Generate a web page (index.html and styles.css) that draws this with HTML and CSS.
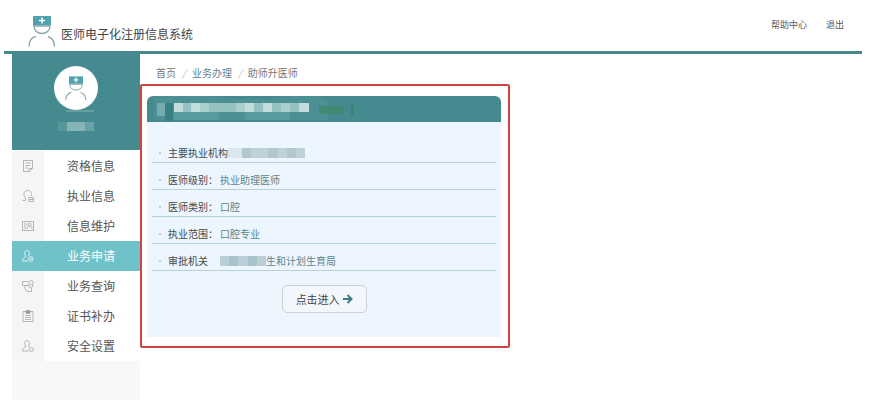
FILE: index.html
```html
<!DOCTYPE html>
<html lang="zh-CN">

<head>
    <meta charset="UTF-8">
    <title>医师电子化注册信息系统</title>
    <link rel="stylesheet" href="styles.css">
</head>

<body>

    <!-- 公用图形 -->
    <svg class="defs" width="0" height="0" aria-hidden="true">
        <symbol id="doctor" viewBox="0 0 28 32">
            <path d="M5 .5h18v9.500H5z" fill="#4fa3ae" />
            <path d="M14 2v6M11 5h6" stroke="#fff" stroke-width="1.500" />
            <path d="M6 10.500c0 10 16 10 16 0zM1 31c0-6 2.500-9 7-10M20 21c4 1.500 6.500 5 6.500 10" fill="none" stroke="#8ba9ad" stroke-width="1.400" />
        </symbol>
    </svg>

    <div class="page">

        <!-- 头部 -->
        <header class="header">
            <svg class="logo"><use href="#doctor" /></svg>
            <h1>医师电子化注册信息系统</h1>
            <nav class="tools">
                <a href="#">帮助中心</a>
                <a href="#">退出</a>
            </nav>
        </header>

        <div class="content">

            <!-- 左侧菜单 -->
            <aside class="side">
                <div class="user">
                    <div class="avatar"><svg><use href="#doctor" /></svg></div>
                    <svg class="user-name" viewBox="0 0 36 21" aria-hidden="true">
                        <path d="M8 1h28" stroke="#86b6b3" />
                        <path d="M0 12h9v9H0z" fill="#57969a" />
                        <path d="M9 12h18v9H9z" fill="#86b5b8" />
                        <path d="M27 12h9v9h-9z" fill="#69a2a6" />
                    </svg>
                </div>
                <ul class="menu">
                    <li><a href="#">
                        <span class="icon"><svg viewBox="0 0 12 12"><path d="M7 11.500H1.500V.5h9V8M3.500 3h5M3.500 5.500h5M3.500 8H6M7 11.500V8.500h3.500z" /></svg></span>
                        <span class="name">资格信息</span></a></li>
                    <li><a href="#">
                        <span class="icon"><svg viewBox="0 0 12 12"><path d="M3.500 8C.5 5 2 .5 5.500.5S10.500 4 9 6M3.500 8v2.500H.5M7 7.500h4.500v4H7zM7 9.500h4.500" /></svg></span>
                        <span class="name">执业信息</span></a></li>
                    <li><a href="#">
                        <span class="icon"><svg viewBox="0 0 12 12"><path d="M.5 1.500h11v9H.5zM2 4h3M2 6h2M2 8h2M5 9c0-2 1-3 2.500-3S10 7 10 9" /><circle cx="7.500" cy="4.500" r="1.500" /></svg></span>
                        <span class="name">信息维护</span></a></li>
                    <li class="current"><a href="#">
                        <span class="icon"><svg viewBox="0 0 12 12"><path d="M4 6.500C2 4 2.500.5 5 .5S8 4 6.500 6M4 6.500C2 7.500.5 8.500.5 11H6" /><circle cx="8.800" cy="9" r="2.300" /><path d="M7.500 9h2.600" /></svg></span>
                        <span class="name">业务申请</span></a></li>
                    <li><a href="#">
                        <span class="icon"><svg viewBox="0 0 12 12"><path d="M6 1.500H.5v4H3v3l2 3h4.500V7.500L6 6.500V4M3 5.500h3" /><circle cx="9" cy="2.800" r="2.200" /><path d="M10.500 4.500V7" /></svg></span>
                        <span class="name">业务查询</span></a></li>
                    <li><a href="#">
                        <span class="icon"><svg viewBox="0 0 12 12"><path d="M1 1.500h10v10H1zM3 5.500h6M3 7.500h6M3 9.500h6" /><path d="M4 .5h4v3H4z" fill="#999" /></svg></span>
                        <span class="name">证书补办</span></a></li>
                    <li><a href="#">
                        <span class="icon"><svg viewBox="0 0 12 12"><path d="M4 6.500C2 4 2.500.5 5 .5S8 4 6.500 6.500M4 6.500C2 7.500.5 8.500.5 11H7M6.500 6.500L8 7.500" /><circle cx="9.500" cy="9.500" r="1.900" /></svg></span>
                        <span class="name">安全设置</span></a></li>
                </ul>
            </aside>

            <main class="main">
                <!-- 面包屑 -->
                <nav class="crumb">
                    <a href="#">首页</a><i>/</i><a href="#" class="link">业务办理</a><i>/</i><span>助师升医师</span>
                </nav>

                <div class="cards">
                    <div class="frame">
                        <section class="card">
                            <div class="card-head">
                                <svg viewBox="0 0 196 26" aria-hidden="true">
                                    <path d="M0 0h64l8 3h48l8-3h36l10 5v19H0z" fill="#4d9094" />
                                    <path d="M3 7h8v13H3z" fill="#75acad" />
                                    <path d="M11 7h8v18h-8z" fill="#398085" />
                                    <path d="M20 7h135v9H20z" fill="#95c1c1" />
                                    <path d="M20 7h9v9h-9zM37 7h9v9h-9zM91 7h9v9h-9zM109 7h9v9h-9zM145 7h10v9h-10z" fill="#c2dedc" />
                                    <path d="M46 7h9v9h-9zM82 7h9v9h-9zM127 7h9v9h-9z" fill="#a9cecd" />
                                    <path d="M20 16h45v8H20zM91 16h45v8H91z" fill="#599b9c" />
                                    <path d="M165 10h25v8h-25z" fill="#418975" />
                                </svg>
                                <b>]</b>
                            </div>
                            <div class="card-body">
                                <dl>
                                    <div class="row">
                                        <dt>主要执业机构</dt>
                                        <dd><svg class="mask" viewBox="0 0 78 10" aria-hidden="true">
                                            <path d="M0 0h14v10H0z" fill="#dbe7ef" />
                                            <path d="M14 0h63v10H14z" fill="#bfd2d8" />
                                            <path d="M14 0h9v10h-9zM40 0h10v10H40zM59 0h9v10h-9z" fill="#b2c8ce" />
                                        </svg></dd>
                                    </div>
                                    <div class="row"><dt>医师级别：</dt><dd>执业助理医师</dd></div>
                                    <div class="row"><dt>医师类别：</dt><dd>口腔</dd></div>
                                    <div class="row"><dt>执业范围：</dt><dd>口腔专业</dd></div>
                                    <div class="row">
                                        <dt>审批机关</dt>
                                        <dd><svg class="mask short" viewBox="0 0 46 10" aria-hidden="true">
                                            <path d="M0 0h46v10H0z" fill="#b9cfd5" />
                                            <path d="M9 0h9v10H9zM28 0h9v10h-9z" fill="#a9c3ca" />
                                        </svg>生和计划生育局</dd>
                                    </div>
                                </dl>
                                <button type="button" class="enter">点击进入
                                    <svg viewBox="0 0 10 10" aria-hidden="true"><path d="M0 5h8M4.500 1L8.500 5l-4 4" /></svg>
                                </button>
                            </div>
                        </section>
                    </div>
                </div>
            </main>

        </div>
    </div>

</body>

</html>
```

FILE: styles.css
```css
* {
    padding: 0;
    margin: 0;
    box-sizing: border-box;
}

body {
    background: #fff;
    color: #555;
    font: 12px/18px "Noto Sans CJK SC", sans-serif;
}

ul {
    list-style: none;
}

a {
    color: inherit;
    text-decoration: none;
}

svg {
    display: block;
}

.defs {
    position: absolute;
}

.page {
    display: flex;
    flex-direction: column;
    min-height: 100vh;
    padding: 0 18px 0 4px;
}

/*头部*/
.header {
    display: flex;
    align-items: flex-end;
    padding: 15px 18px 3px 24px;
    border-bottom: 3px solid #45898c;
}

.logo {
    width: 28px;
    height: 33px;
}

.header h1 {
    margin-left: 5px;
    padding-bottom: 5px;
    font-size: 12px;
    font-weight: normal;
    color: #444;
}

.tools {
    display: flex;
    align-self: flex-start;
    gap: 19px;
    margin-left: auto;
    padding-top: 1px;
    font-size: 9px;
}

.content {
    display: flex;
    flex: 1;
    padding-left: 8px;
}

/*左侧*/
.side {
    flex: 0 0 128px;
    background: #f8f8f8;
}

.user {
    display: flex;
    flex-direction: column;
    align-items: center;
    height: 97px;
    padding-top: 12px;
    background: #458a8f;
    border-bottom: 1px solid #fff;
}

.avatar {
    width: 44px;
    height: 44px;
    padding: 10px 11px;
    border-radius: 50%;
    background: #fff;
}

.avatar svg {
    width: 22px;
    height: 25px;
}

.user-name {
    width: 36px;
    height: 21px;
}

.menu {
    background: #fff;
}

.menu a {
    display: flex;
    height: 30px;
    line-height: 30px;
}

.icon {
    display: flex;
    align-items: center;
    justify-content: center;
    width: 32px;
    background: #f5f5f5;
}

.icon svg {
    width: 12px;
    height: 12px;
    fill: none;
    stroke: #a5a5a5;
    stroke-width: 0.8;
}

.name {
    padding-left: 23px;
}

.menu .current,
.current .icon {
    background: #6fc2ca;
    color: #fff;
}

.current .icon svg {
    stroke: #fff;
}

/*右侧*/
.main {
    flex: 1;
}

.crumb {
    padding: 12px 16px 4px;
    font-size: 10px;
    line-height: 14px;
    color: #777;
}

.crumb i {
    padding: 0 6px;
    color: #bbb;
}

.crumb .link {
    color: #5d8290;
}

.cards {
    display: grid;
    grid-template-columns: 20fr 19fr;
}

.frame {
    padding: 10px 7px 9px 5px;
    border: 2px solid #cf4540;
    border-radius: 2px;
}

.card {
    overflow: hidden;
    border-radius: 6px 6px 0 0;
    background: #edf5fe;
}

.card-head {
    display: flex;
    align-items: center;
    height: 26px;
    padding-left: 7px;
    background: #458a8f;
    color: #2f8050;
}

.card-head svg {
    width: 196px;
    height: 26px;
}

.card-head b {
    font-size: 10px;
}

.card-body {
    padding: 14px 5px 24px;
}

.row {
    display: flex;
    padding-top: 8px;
    border-bottom: 1px solid #b5d2d7;
    font-size: 10px;
}

.row dt {
    display: flex;
    align-items: center;
    min-width: 68px;
    color: #3f4a4e;
}

/*行首小圆点*/
.row dt::before {
    content: "";
    width: 2px;
    height: 2px;
    margin: 0 7px 0 7px;
    border-radius: 50%;
    background: #b5bcc0;
}

.row dd {
    display: flex;
    align-items: center;
    color: #5c868a;
}

.mask {
    width: 78px;
    height: 10px;
}

.mask.short {
    width: 46px;
}

.enter {
    display: flex;
    align-items: center;
    gap: 3px;
    height: 28px;
    margin: 14px auto 0;
    padding: 0 13px;
    border: 1px solid #c6d3d8;
    border-radius: 5px;
    background: #f3f7fc;
    color: #444;
    font: inherit;
    font-size: 11px;
    cursor: pointer;
}

.enter svg {
    width: 10px;
    height: 10px;
    fill: none;
    stroke: #397e7e;
    stroke-width: 2;
}
```
